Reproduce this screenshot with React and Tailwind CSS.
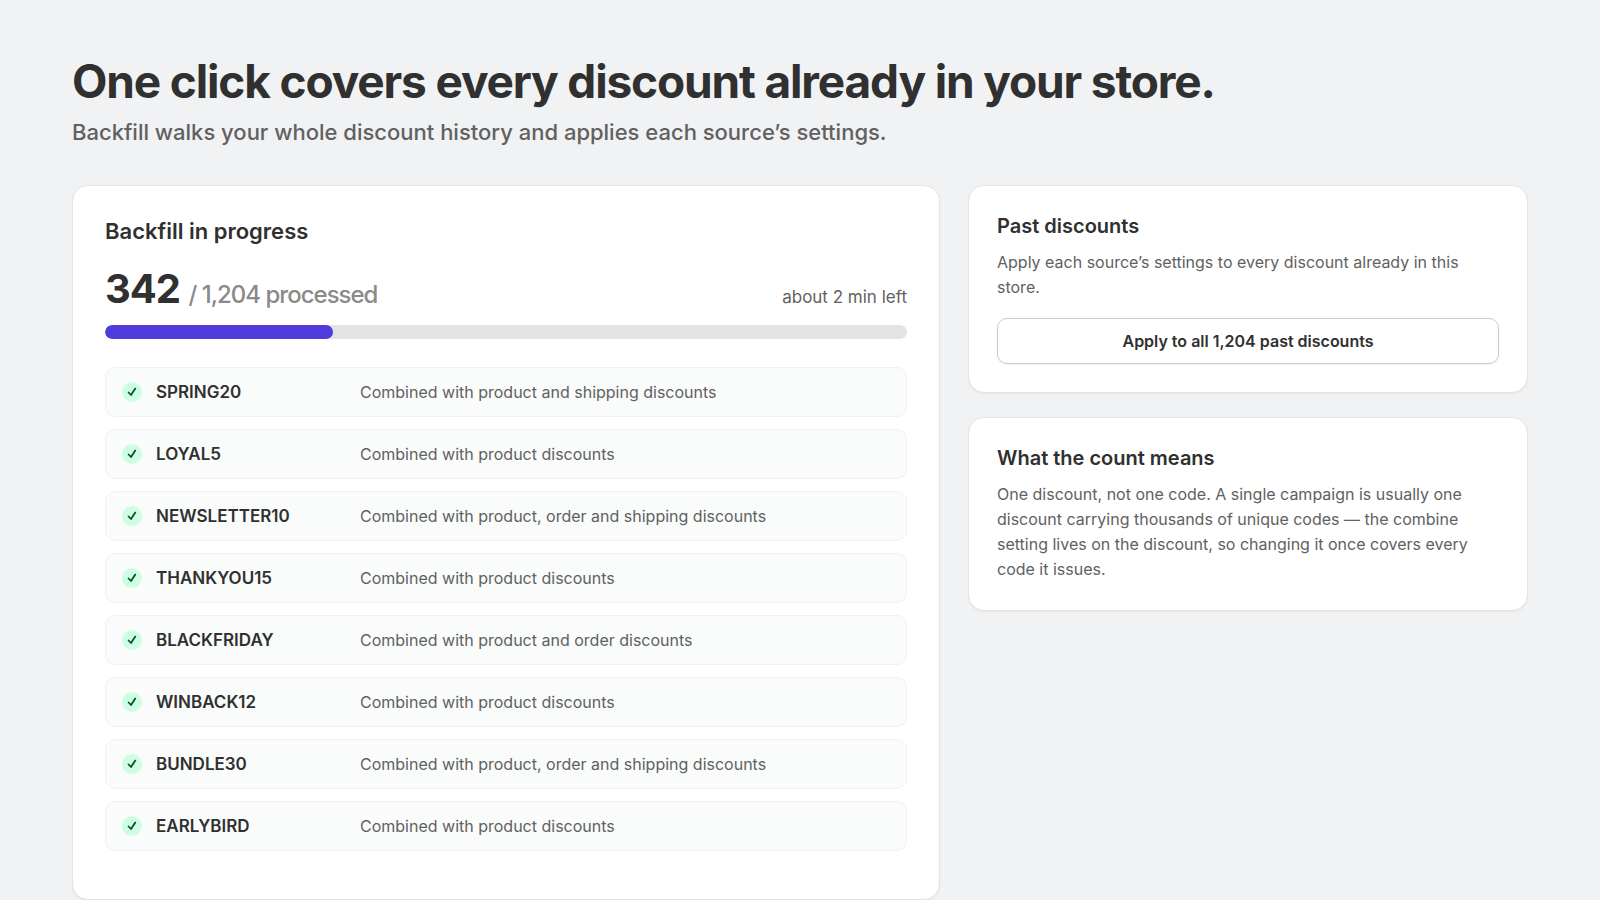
const TOTAL = 1204;
const PROCESSED = 342;

const discounts = [
  { code: "SPRING20", result: "Combined with product and shipping discounts" },
  { code: "LOYAL5", result: "Combined with product discounts" },
  { code: "NEWSLETTER10", result: "Combined with product, order and shipping discounts" },
  { code: "THANKYOU15", result: "Combined with product discounts" },
  { code: "BLACKFRIDAY", result: "Combined with product and order discounts" },
  { code: "WINBACK12", result: "Combined with product discounts" },
  { code: "BUNDLE30", result: "Combined with product, order and shipping discounts" },
  { code: "EARLYBIRD", result: "Combined with product discounts" },
];

function CheckBadge() {
  return (
    <span className="flex size-5 shrink-0 items-center justify-center rounded-full bg-[#cdfee1]">
      <svg viewBox="0 0 20 20" className="size-5" fill="none" aria-hidden="true">
        <path d="M6.6 10.5 9 13l4.3-6.4" stroke="#0c5132" strokeWidth="1.8" strokeLinecap="round" strokeLinejoin="round" />
      </svg>
    </span>
  );
}

function DiscountRow({ code, result }) {
  return (
    <li className="flex h-[50px] items-center rounded-[10px] border border-[#f1f1f1] bg-[#fafcfb] px-4">
      <CheckBadge />
      <span className="ml-3.5 w-[204px] text-[17px] leading-6 font-semibold">{code}</span>
      <span className="text-[16px] leading-6 text-[#616161]">{result}</span>
    </li>
  );
}

function Card({ className, children }) {
  return (
    <section className={`rounded-2xl border border-[#e3e3e3] bg-white shadow-xs ${className}`}>
      {children}
    </section>
  );
}

export default function App() {
  const percent = (PROCESSED / TOTAL) * 100;

  return (
    <main className="min-h-screen bg-[#f1f2f4] px-[72px] pt-14 font-['Inter',sans-serif] text-[#303030]">
      <h1 className="text-[46px] leading-[50px] font-bold tracking-tight">
        One click covers every discount already in your store.
      </h1>
      <p className="mt-2.5 text-[22px] leading-8 font-medium text-[#616161]">
        Backfill walks your whole discount history and applies each source’s settings.
      </p>

      <div className="mt-[37px] grid grid-cols-[minmax(0,1fr)_560px] items-start gap-7">
        <Card className="px-8 pt-8 pb-12">
          <h2 className="text-[22px] leading-[26px] font-semibold">Backfill in progress</h2>
          <div className="mt-[17px] flex items-baseline justify-between">
            <p className="text-[40px] leading-[56px] font-bold tracking-tight">
              {PROCESSED}{" "}
              <span className="text-[24px] font-medium text-[#8a8a8a]">
                / {TOTAL.toLocaleString("en-US")} processed
              </span>
            </p>
            <p className="text-[17px] text-[#616161]">about 2 min left</p>
          </div>
          <div
            role="progressbar"
            aria-label="Backfill progress"
            aria-valuenow={PROCESSED}
            aria-valuemin={0}
            aria-valuemax={TOTAL}
            className="mt-0.5 h-3.5 overflow-hidden rounded-full bg-[#e3e3e3]"
          >
            <div className="h-full rounded-full bg-[#4f3cdd]" style={{ width: `${percent}%` }} />
          </div>
          <ul className="mt-7 flex flex-col gap-3">
            {discounts.map((discount) => (
              <DiscountRow key={discount.code} {...discount} />
            ))}
          </ul>
        </Card>

        <div className="flex flex-col gap-6">
          <Card className="p-7">
            <h2 className="text-[20px] leading-6 font-semibold">Past discounts</h2>
            <p className="mt-3 text-[16px] leading-[25px] text-[#616161]">
              Apply each source’s settings to every discount already in this store.
            </p>
            <button
              type="button"
              className="mt-[18px] h-[46px] w-full rounded-[10px] border border-[#c9cccf] bg-white text-[16px] font-semibold shadow-xs"
            >
              Apply to all 1,204 past discounts
            </button>
          </Card>
          <Card className="p-7">
            <h2 className="text-[20px] leading-6 font-semibold">What the count means</h2>
            <p className="mt-3 text-[16px] leading-[25px] text-[#616161]">
              One discount, not one code. A single campaign is usually one discount carrying
              thousands of unique codes — the combine setting lives on the discount, so changing
              it once covers every code it issues.
            </p>
          </Card>
        </div>
      </div>
    </main>
  );
}
